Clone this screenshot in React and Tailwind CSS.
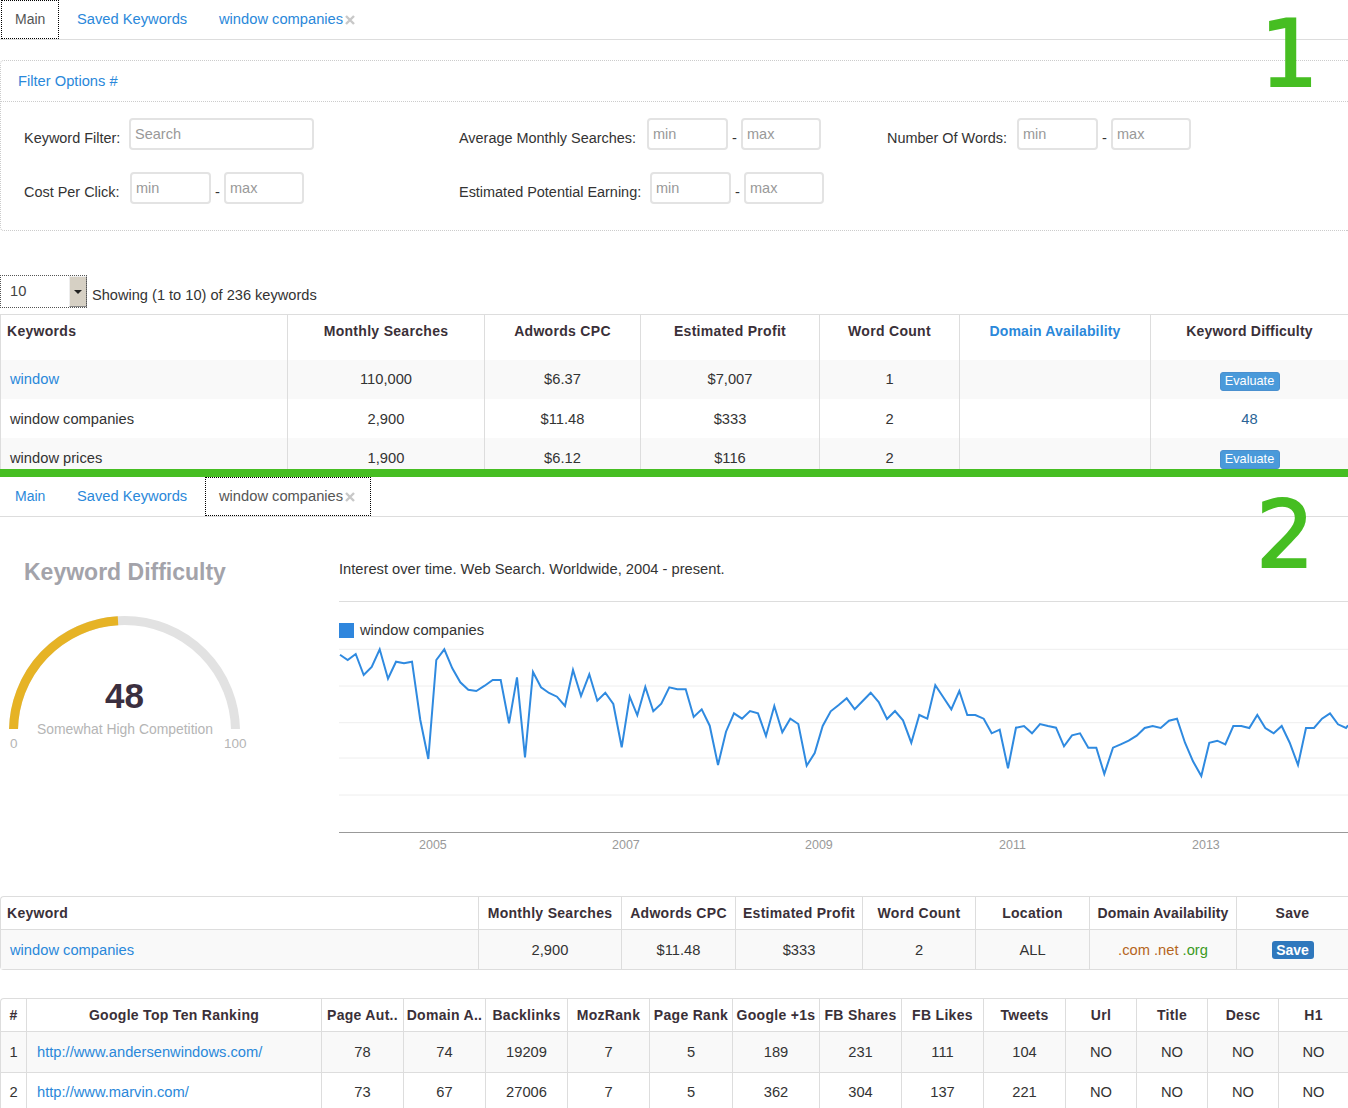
import React from 'react';

const inputClass = 'h-8 rounded border-2 border-[#e3e3e3] bg-white pl-[4px] pt-px text-[14.5px] leading-[26px] text-[#999]';
const sans = "font-['Liberation_Sans',Arial,sans-serif]";

const chartLeft = [
  [30,134],[53,150],[77,132],[101,195],[125,171],[149,118],[174,206],[198,155],[222,160],[246,155],[271,330],[295,447],
  [319,150],[343,118],[367,175],[391,217],[415,239],[439,243],[464,227],[488,210],[512,210],[537,340],[561,202],[585,442],
  [609,186],[633,232],[657,249],[681,260],[705,288],[729,180],[753,258],[778,193],[802,272],[826,248],[850,282],[875,412],
  [899,260],[922,316],[946,231],[970,304],[994,281],[1018,232],[1042,238],[1067,238],[1091,321],[1115,298],[1139,347],[1164,465],
  [1188,365],[1212,310],[1236,326],[1260,303],[1284,310],[1308,378],[1333,288],[1357,367],[1381,326],[1405,342],[1430,467],[1454,429],
  [1478,348],[1502,304],[1526,285],
];
const chartRight = [
  [26,265],[50,298],[74,273],[98,248],[122,276],[147,327],[171,303],[195,331],[220,398],[244,315],[268,326],[292,226],
  [316,262],[340,298],[364,243],[388,315],[412,315],[437,326],[461,370],[485,359],[510,475],[534,353],[558,348],[582,370],
  [606,342],[630,348],[654,353],[678,409],[702,376],[726,370],[751,413],[775,413],[799,492],[825,413],[848,403],[872,392],
  [896,377],[920,354],[944,348],[968,354],[993,332],[1017,326],[1041,398],[1065,454],[1090,498],[1114,398],[1138,392],[1162,403],
  [1186,348],[1210,348],[1234,354],[1258,315],[1282,354],[1307,370],[1331,348],[1355,398],[1380,465],[1404,354],[1428,354],[1452,326],
  [1476,310],[1500,343],[1524,354],[1530,346],
];
// zoomed crop coords -> page coords
const trendPoints = [
  ...chartLeft.map(([x, y]) => [330 + x / 3, 610 + y / 3]),
  ...chartRight.map(([x, y]) => [838 + x / 3, 610 + y / 3]),
].map(([x, y]) => `${(x - 339).toFixed(1)},${(y - 640).toFixed(1)}`).join(' ');

const keywordRows = [
  { name: 'window', link: true, searches: '110,000', cpc: '$6.37', profit: '$7,007', words: '1', evaluate: true },
  { name: 'window companies', searches: '2,900', cpc: '$11.48', profit: '$333', words: '2', score: '48' },
  { name: 'window prices', searches: '1,900', cpc: '$6.12', profit: '$116', words: '2', evaluate: true },
];

const rankHeaders = ['Page Aut..', 'Domain A..', 'Backlinks', 'MozRank', 'Page Rank', 'Google +1s', 'FB Shares', 'FB Likes', 'Tweets', 'Url', 'Title', 'Desc', 'H1'];
const rankWidths = ['w-[82px]', 'w-[82px]', 'w-[82px]', 'w-[82px]', 'w-[83px]', 'w-[87px]', 'w-[82px]', 'w-[82px]', 'w-[82px]', 'w-[71px]', 'w-[71px]', 'w-[71px]', 'w-[70px]'];
const rankRows = [
  { url: 'http://www.andersenwindows.com/', vals: ['78', '74', '19209', '7', '5', '189', '231', '111', '104', 'NO', 'NO', 'NO', 'NO'] },
  { url: 'http://www.marvin.com/', vals: ['73', '67', '27006', '7', '5', '362', '304', '137', '221', 'NO', 'NO', 'NO', 'NO'] },
];

function Tabs({ active }) {
  const tabs = [
    { label: 'Main', width: 'w-[58px] text-[14px]' },
    { label: 'Saved Keywords', width: 'w-[138px]' },
    { label: 'window companies', width: 'w-[166px]' },
  ];
  return (
    <div className="flex h-10 gap-1 border-b border-[#ddd] pl-px">
      {tabs.map((tab, i) => (
        <div
          key={tab.label}
          className={`flex h-[39px] items-center whitespace-nowrap pl-[14px] ${tab.width} ${
            i === active ? 'bg-white text-[#555] outline-1 outline-dotted outline-offset-[-1px] outline-black' : 'text-[#2a88da]'
          }`}
        >
          {tab.label}
          {i === 2 && (
            <svg className="ml-[2px] mt-px" width="10" height="10" viewBox="0 0 10 10">
              <path d="M1 1 L9 9 M9 1 L1 9" stroke="#c8c8c8" strokeWidth="2.4" />
            </svg>
          )}
        </div>
      ))}
    </div>
  );
}

function MinMax() {
  return (
    <div className="flex">
      <div className={`${inputClass} w-[81px]`}>min</div>
      <span className="mt-[9px] w-[13px] text-center text-[#333]">-</span>
      <div className={`${inputClass} w-[80px]`}>max</div>
    </div>
  );
}

function FilterField({ label, labelWidth, children }) {
  return (
    <div className="flex">
      <span className={`mt-[10px] whitespace-nowrap text-[14.45px] ${labelWidth}`}>{label}</span>
      {children}
    </div>
  );
}

function FilterPanel() {
  return (
    <div className="mt-5 h-[171px] rounded-l border border-r-0 border-dotted border-[#ccc]">
      <div className="flex h-[41px] items-center border-b border-dotted border-[#ccc] pl-[17px] text-[#2a88da]">Filter Options #</div>
      <div className="grid grid-cols-[435px_428px_1fr] gap-y-[22px] pl-[23px] pt-4">
        <FilterField label="Keyword Filter:" labelWidth="w-[105px]">
          <div className={`${inputClass} w-[185px]`}>Search</div>
        </FilterField>
        <FilterField label="Average Monthly Searches:" labelWidth="w-[188px]">
          <MinMax />
        </FilterField>
        <FilterField label="Number Of Words:" labelWidth="w-[130px]">
          <MinMax />
        </FilterField>
        <FilterField label="Cost Per Click:" labelWidth="w-[106px]">
          <MinMax />
        </FilterField>
        <FilterField label="Estimated Potential Earning:" labelWidth="w-[191px]">
          <MinMax />
        </FilterField>
      </div>
    </div>
  );
}

function EvaluateButton() {
  return (
    <span className="inline-block h-[19px] w-[60px] rounded-[3px] border border-[#4a90cf] bg-[#4a9ada] text-center text-[12.7px] leading-[17px] text-white">
      Evaluate
    </span>
  );
}

function KeywordsTable() {
  const th = 'border-l border-[#ddd] px-1 pt-[6px] align-top text-center font-bold tracking-[0.3px] text-[#3a3038]';
  const td = 'border-l border-[#ddd] text-center';
  return (
    <table className="w-[1348px] table-fixed border-separate border-spacing-0 border-t border-[#ddd]">
      <thead>
        <tr className="h-[45px] text-[14px]">
          <th className="w-[287px] border-l border-[#ddd] pl-[6px] pt-[6px] text-left align-top font-bold tracking-[0.3px] text-[#3a3038]">Keywords</th>
          <th className={`${th} w-[197px]`}>Monthly Searches</th>
          <th className={`${th} w-[156px]`}>Adwords CPC</th>
          <th className={`${th} w-[179px]`}>Estimated Profit</th>
          <th className={`${th} w-[140px]`}>Word Count</th>
          <th className={`${th} w-[191px] !tracking-[0.15px] !text-[#2a88da]`}>Domain Availability</th>
          <th className={`${th} w-[198px] !tracking-[0.2px]`}>Keyword Difficulty</th>
        </tr>
      </thead>
      <tbody>
        {keywordRows.map((row, i) => (
          <tr key={row.name} className={`h-[39px] ${i % 2 === 0 ? 'bg-[#f9f9f9]' : 'bg-white'}`}>
            <td className={`border-l border-[#ddd] pl-[9px] ${i > 0 ? 'pt-[2px]' : ''} ${row.link ? 'text-[#2a88da]' : ''}`}>{row.name}</td>
            <td className={`${td} ${i > 0 ? 'pt-[2px]' : ''}`}>{row.searches}</td>
            <td className={`${td} ${i > 0 ? 'pt-[2px]' : ''}`}>{row.cpc}</td>
            <td className={`${td} ${i > 0 ? 'pt-[2px]' : ''}`}>{row.profit}</td>
            <td className={`${td} ${i > 0 ? 'pt-[2px]' : ''}`}>{row.words}</td>
            <td className={td}></td>
            <td className={`${td} pt-[2px]`}>
              {row.evaluate ? <EvaluateButton /> : <span className="text-[#2a6496]">{row.score}</span>}
            </td>
          </tr>
        ))}
      </tbody>
    </table>
  );
}

function Gauge() {
  return (
    <div className="relative h-[300px] w-[339px] shrink-0">
      <h2 className="pl-6 pt-[40px] text-[23px] font-bold leading-[30px] text-[#a3a3aa]">Keyword Difficulty</h2>
      <svg className="absolute left-0 top-[73px]" width="260" height="139" viewBox="0 0 260 139">
        <path d="M 13.5 141.5 A 111 111 0 0 1 235.5 141.5" fill="none" stroke="#e2e2e2" strokeWidth="9" />
        <path d="M 13.5 141.5 A 111 111 0 0 1 118 30.7" fill="none" stroke="#e6b325" strokeWidth="9" />
      </svg>
      <div className="absolute left-[105px] top-[159px] text-[35px] font-bold leading-10 text-[#3b2f3f]">48</div>
      <div className="absolute left-[37px] top-[202px] whitespace-nowrap text-[13.9px] leading-5 text-[#b5b5b5]">Somewhat High Competition</div>
      <div className="absolute left-[10px] top-[217px] text-[13.5px] leading-5 text-[#b5b5b5]">0</div>
      <div className="absolute left-[224px] top-[217px] text-[13.5px] leading-5 text-[#b5b5b5]">100</div>
    </div>
  );
}

function TrendChart() {
  const grid = [9.3, 46, 82.7, 118, 155];
  const years = [['2005', 419], ['2007', 612], ['2009', 805], ['2011', 999], ['2013', 1192]];
  return (
    <div className="min-w-0 flex-1">
      <p className="mt-[42px] leading-5">Interest over time. Web Search. Worldwide, 2004 - present.</p>
      <div className="mt-[22px] border-t border-[#ddd]"></div>
      <div className="mt-5 flex h-[16px] items-center gap-[6px]">
        <span className="h-[15px] w-[15px] bg-[#2f86dd]"></span>
        <span>window companies</span>
      </div>
      <svg className="mt-[2px] block" width="1009" height="215" viewBox="0 0 1009 215">
        {grid.map((y) => (
          <line key={y} x1="0" x2="1009" y1={y} y2={y} stroke="#eee" strokeWidth="1" />
        ))}
        <line x1="0" x2="1009" y1="192.5" y2="192.5" stroke="#999" strokeWidth="1" />
        <polyline points={trendPoints} fill="none" stroke="#2f8ae0" strokeWidth="2" strokeLinejoin="miter" />
        {years.map(([year, x]) => (
          <text key={year} x={x - 339} y="209" fontSize="12.5" fill="#999">{year}</text>
        ))}
      </svg>
    </div>
  );
}

function SummaryTable() {
  const th = 'border-b border-l border-[#ddd] text-center font-bold tracking-[0.3px] text-[#3a3038]';
  const td = 'border-l border-[#ddd] pt-[2px] text-center';
  return (
    <table className="w-[1348px] table-fixed border-separate border-spacing-0 rounded-l border border-r-0 border-[#ddd]">
      <thead>
        <tr className="h-[33px] text-[14px]">
          <th className="w-[477px] border-b border-[#ddd] pl-[6px] text-left font-bold tracking-[0.3px] text-[#3a3038]">Keyword</th>
          <th className={`${th} w-[143px]`}>Monthly Searches</th>
          <th className={`${th} w-[114px]`}>Adwords CPC</th>
          <th className={`${th} w-[127px]`}>Estimated Profit</th>
          <th className={`${th} w-[113px]`}>Word Count</th>
          <th className={`${th} w-[114px]`}>Location</th>
          <th className={`${th} w-[147px] !tracking-[0.15px]`}>Domain Availability</th>
          <th className={th}>Save</th>
        </tr>
      </thead>
      <tbody>
        <tr className="h-[39px] bg-[#f9f9f9]">
          <td className="pl-[9px] pt-[2px] text-[#2a88da]">window companies</td>
          <td className={td}>2,900</td>
          <td className={td}>$11.48</td>
          <td className={td}>$333</td>
          <td className={td}>2</td>
          <td className={td}>ALL</td>
          <td className={td}>
            <span className="text-[#b5651d]">.com .net</span> <span className="text-[#3c9a1e]">.org</span>
          </td>
          <td className={td}>
            <span className="inline-block h-[18px] w-[42px] rounded-[3px] bg-[#2f78bd] text-[14px] font-bold leading-[18px] text-white">Save</span>
          </td>
        </tr>
      </tbody>
    </table>
  );
}

function RankingTable() {
  const th = 'border-l border-[#ddd] whitespace-nowrap text-center text-[14px] font-bold tracking-[0.3px] text-[#3a3038]';
  const td = 'border-l border-t border-[#ddd] text-center';
  return (
    <table className="mt-[28px] w-[1348px] table-fixed border-separate border-spacing-0 rounded-tl border-l border-t border-[#ddd]">
      <thead>
        <tr className="h-8">
          <th className="w-[25px] text-center text-[14px] font-bold text-[#3a3038]">#</th>
          <th className={`${th} w-[295px]`}>Google Top Ten Ranking</th>
          {rankHeaders.map((h, i) => (
            <th key={h} className={`${th} ${rankWidths[i]}`}>{h}</th>
          ))}
        </tr>
      </thead>
      <tbody>
        {rankRows.map((row, i) => (
          <tr key={row.url} className={`h-[41px] ${i === 0 ? 'bg-[#f9f9f9]' : 'bg-white'}`}>
            <td className={`border-t border-[#ddd] text-center ${i === 1 ? 'pb-[2px]' : ''}`}>{i + 1}</td>
            <td className={`${td} !text-left pl-[10px] text-[#2a88da] ${i === 1 ? 'pb-[2px]' : ''}`}>{row.url}</td>
            {row.vals.map((v, j) => (
              <td key={j} className={`${td} ${i === 1 ? 'pb-[2px]' : ''}`}>{v}</td>
            ))}
          </tr>
        ))}
      </tbody>
    </table>
  );
}

export default function App() {
  return (
    <div className={`relative h-[1108px] w-full overflow-hidden bg-white text-[14.7px] text-[#333] ${sans}`}>
      <section className="h-[469px] overflow-hidden">
        <Tabs active={0} />
        <FilterPanel />
        <div className="mt-[44px] flex h-[39px] items-start gap-[5px]">
          <div className="flex h-[33px] w-[87px] items-center justify-between pl-[10px] outline-1 outline-dotted outline-offset-[-1px] outline-[#555]">
            <span className="-mt-px text-[#444]">10</span>
            <span className="flex h-[31px] w-[18px] items-center justify-center border border-[#888] border-t-[#eee] border-l-[#eee] bg-[#d6d0c4]">
              <span className="h-0 w-0 border-x-[4px] border-t-[4px] border-x-transparent border-t-[#222]"></span>
            </span>
          </div>
          <span className="mt-[10px] text-[14.6px]">Showing (1 to 10) of 236 keywords</span>
        </div>
        <KeywordsTable />
      </section>

      <div className="h-2 bg-[#46be22]"></div>

      <section>
        <Tabs active={2} />
        <div className="flex h-[379px]">
          <Gauge />
          <TrendChart />
        </div>
        <SummaryTable />
        <RankingTable />
      </section>

      <div className="absolute left-[1260px] top-[-5px] font-['DejaVu_Sans'] text-[92px] leading-[120px] text-[#46be22] [-webkit-text-stroke:2px_#46be22]">1</div>
      <div className="absolute left-[1256px] top-[476px] font-['DejaVu_Sans'] text-[92px] leading-[120px] text-[#46be22] [-webkit-text-stroke:2px_#46be22]">2</div>
    </div>
  );
}
